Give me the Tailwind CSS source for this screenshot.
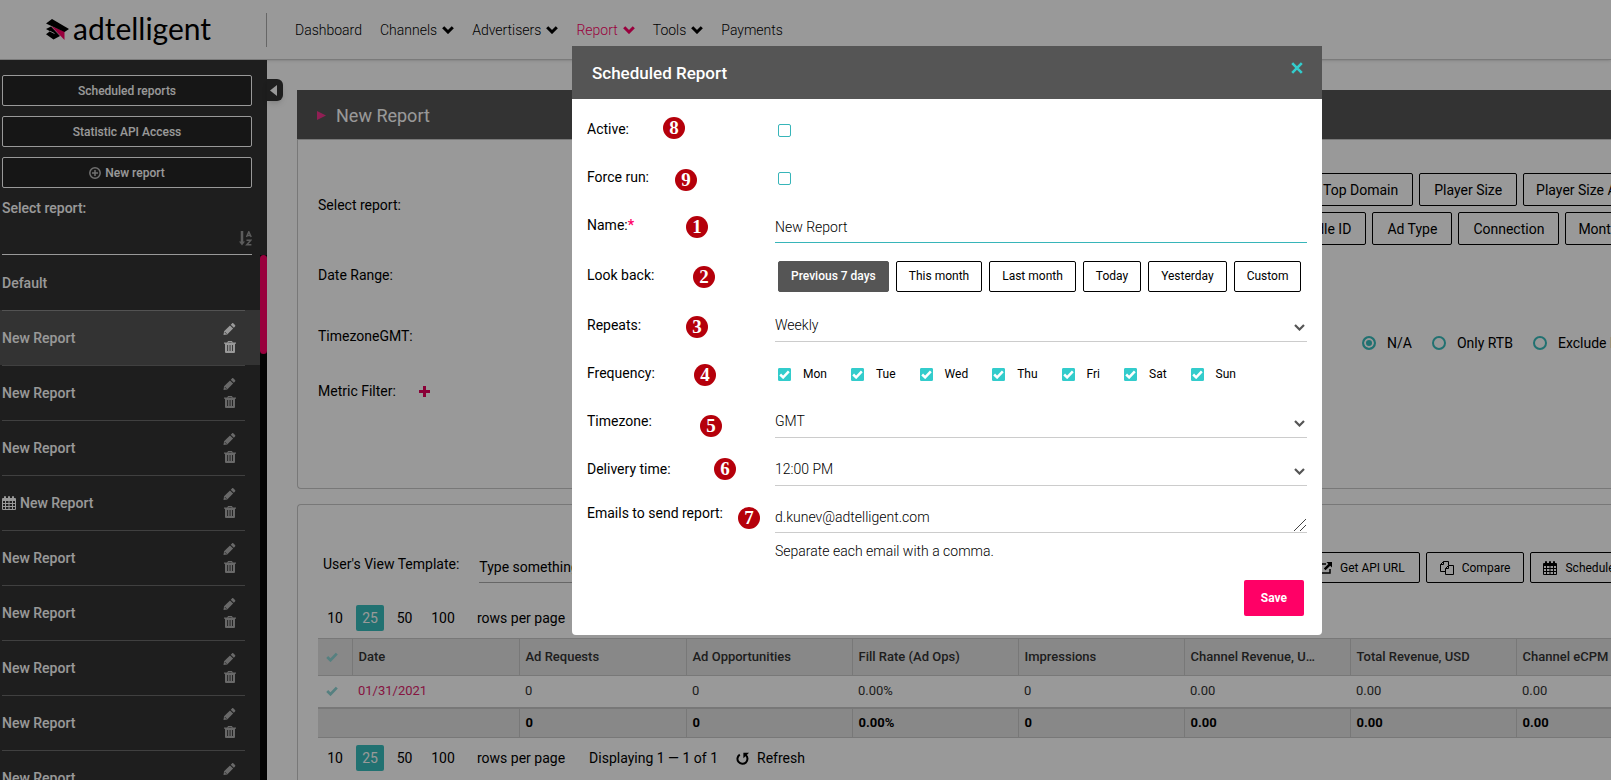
<!DOCTYPE html>
<html lang="en">
<head>
    <meta charset="UTF-8">
    <meta name="viewport" content="width=device-width, initial-scale=1.0">
    <title>Adtelligent - Scheduled Report</title>
    <script src="https://cdn.jsdelivr.net/npm/@tailwindcss/browser@4"></script>
</head>
<body class="h-screen overflow-hidden flex flex-col bg-white text-black text-[14px] leading-5 font-['Roboto',sans-serif]">

    <!-- Icon sprite -->
    <svg class="hidden">
        <symbol id="chevron" viewBox="0 0 12 8"><path d="M1.2 1.2 6 6l4.800-4.800" fill="none" stroke="currentColor" stroke-width="3"/></symbol>
        <symbol id="chevron-thin" viewBox="0 0 11 7"><path d="M1 1l4.500 4.500L10 1" fill="none" stroke="currentColor" stroke-width="2.200"/></symbol>
        <symbol id="pencil" viewBox="0 0 13 13"><path d="M0 13l.6-4L7 2.600 10.400 6 4 12.400zM7.800 1.800 9.200.5c.5-.5 1.100-.5 1.600 0l1.700 1.700c.5.500.5 1.100 0 1.600L11.200 5.200z" fill="currentColor"/><path d="M1.300 9.700l2 2" stroke="#323232" stroke-width=".8"/></symbol>
        <symbol id="trash" viewBox="0 0 12 12"><path fill="currentColor" fill-rule="evenodd" d="M4 0h4l.7 1.500H12v1.200h-1V11q0 1-1 1H2q-1 0-1-1V2.700H0V1.500h3.300zM4.500 1l-.2.500h3.400L7.500 1zM3.200 4v6h.9V4zm2.400 0v6h.9V4zM8 4v6h.9V4z"/></symbol>
        <symbol id="calendar" viewBox="0 0 14 14"><path fill="currentColor" fill-rule="evenodd" d="M1 2h1V1q0-1 1-1t1 1v1h2V1q0-1 1-1t1 1v1h2V1q0-1 1-1t1 1v1h1q1 0 1 1v10q0 1-1 1H1q-1 0-1-1V3q0-1 1-1zm0 3v2h2V5zm3 0v2h2.500V5zm3.500 0v2H10V5zM11 5v2h2V5zM1 8v2h2V8zm3 0v2h2.500V8zm3.500 0v2H10V8zM11 8v2h2V8zM1 11v2h2v-2zm3 0v2h2.500v-2zm3.500 0v2H10v-2zm3.500 0v2h2v-2z"/></symbol>
        <symbol id="check" viewBox="0 0 12 10"><path d="M1.200 5 4.500 8.200 10.800 1.600" fill="none" stroke="currentColor" stroke-width="2.800"/></symbol>
        <symbol id="refresh" viewBox="0 0 13 13"><path d="M3.800 2.600A5 5 0 1 0 9.700 3" fill="none" stroke="currentColor" stroke-width="2"/><path d="M13 .8H7.400v5.400z" fill="currentColor"/></symbol>
    </svg>

    <header class="h-[60px] shrink-0 flex items-center border-b border-[#ccc] shadow-sm relative">
        <a href="#" class="w-[267px] h-[34px] pl-[46px] flex items-center gap-1 border-r border-[#aaa]" aria-label="adtelligent">
            <svg class="w-[23px] h-[21px] shrink-0" viewBox="0 0 23 21">
                <path d="M5 7.500 0 10l4 2.200L0 15.200 7.500 20.500 14 17z" fill="#000"/>
                <path d="M4 12.200 8.500 14.500" stroke="#fff" stroke-width=".8"/>
                <path d="M5 7 18.500 12.500V21z" fill="#f06"/>
                <path d="M6 0 23 10 18.500 13 0 4.500z" fill="#000"/>
            </svg>
            <span class="font-['Lato',sans-serif] text-[30px] leading-8 -mt-1">adtelligent</span>
        </a>
        <nav class="flex items-center gap-[18px] pl-7 font-light">
            <a href="#">Dashboard</a>
            <a href="#" class="flex items-center gap-[5px]">Channels <svg class="w-3 h-2"><use href="#chevron"/></svg></a>
            <a href="#" class="flex items-center gap-[5px]">Advertisers <svg class="w-3 h-2"><use href="#chevron"/></svg></a>
            <a href="#" class="flex items-center gap-[5px] text-[#f06]">Report <svg class="w-3 h-2"><use href="#chevron"/></svg></a>
            <a href="#" class="flex items-center gap-[5px]">Tools <svg class="w-3 h-2"><use href="#chevron"/></svg></a>
            <a href="#">Payments</a>
        </nav>
    </header>

    <div class="flex flex-1 min-h-0">

        <aside class="relative w-[267px] shrink-0 bg-[#323232] text-white flex flex-col">
            <button class="absolute left-full top-[19px] w-4 h-[22px] pr-1 bg-[#323232] rounded-r-md shadow-md flex items-center justify-center" aria-label="Collapse sidebar">
                <svg class="w-[7px] h-[11px]" viewBox="0 0 7 11"><path d="M7 0v11L0 5.500z" fill="#fff"/></svg>
            </button>

            <div class="pl-0.5 pr-[15px] pt-[15px] shrink-0">
                <div class="flex flex-col gap-2.5 text-[12px] font-medium">
                    <button class="h-[31px] border border-white rounded-xs bg-[#252525]">Scheduled reports</button>
                    <button class="h-[31px] border border-white rounded-xs bg-[#252525]">Statistic API Access</button>
                    <button class="h-[31px] border border-white rounded-xs bg-[#252525] flex items-center justify-center gap-1">
                        <svg class="w-3 h-3" viewBox="0 0 12 12" fill="none" stroke="#bbb" stroke-width="1.500"><circle cx="6" cy="6" r="5.200"/><path d="M6 3v6M3 6h6"/></svg>
                        New report
                    </button>
                </div>
                <label for="report-search" class="block mt-2.5 font-medium">Select report:</label>
                <div class="h-[37px] flex items-end gap-1 border-b border-white pb-2">
                    <input id="report-search" type="text" class="flex-1 min-w-0 h-5 outline-none">
                    <svg class="w-[13px] h-[15px]" viewBox="0 0 13 15" fill="none" stroke="#999"><path d="M3 0v11" stroke-width="2.500"/><path d="M0 10.500h6L3 14.500z" fill="#999" stroke="none"/><path d="M7.500 6 9.800.8 12.200 6M8.200 4.500h3.400M7.500 9.200h4.300L7.800 13.700h4.600" stroke-width="1.500"/></svg>
                </div>
            </div>

            <div class="flex flex-1 min-h-0">
                <ul class="flex-1 overflow-hidden font-medium">
                    <li class="h-[55px] pl-0.5 flex items-center">Default</li>
                    <li class="h-[55px] pl-0.5 pr-[15px] bg-[#555]">
                        <div class="h-full pr-[9px] flex items-center border-t border-[#8a8a8a]"><span class="flex-1">New Report</span>
                            <div class="flex flex-col items-center gap-1.5"><button aria-label="Edit"><svg class="w-[13px] h-3"><use href="#pencil"/></svg></button><button aria-label="Delete"><svg class="w-3 h-3"><use href="#trash"/></svg></button></div></div>
                    </li>
                    <li class="h-[55px] pl-0.5 pr-[15px]">
                        <div class="h-full pr-[9px] flex items-center border-t border-[#6b6b6b]"><span class="flex-1">New Report</span>
                            <div class="flex flex-col items-center gap-1.5 text-[#b0b0b0]"><button aria-label="Edit"><svg class="w-[13px] h-3"><use href="#pencil"/></svg></button><button aria-label="Delete"><svg class="w-3 h-3"><use href="#trash"/></svg></button></div></div>
                    </li>
                    <li class="h-[55px] pl-0.5 pr-[15px]">
                        <div class="h-full pr-[9px] flex items-center border-t border-[#6b6b6b]"><span class="flex-1">New Report</span>
                            <div class="flex flex-col items-center gap-1.5 text-[#b0b0b0]"><button aria-label="Edit"><svg class="w-[13px] h-3"><use href="#pencil"/></svg></button><button aria-label="Delete"><svg class="w-3 h-3"><use href="#trash"/></svg></button></div></div>
                    </li>
                    <li class="h-[55px] pl-0.5 pr-[15px]">
                        <div class="h-full pr-[9px] flex items-center border-t border-[#6b6b6b]"><svg class="w-3.5 h-3.5 mr-1"><use href="#calendar"/></svg><span class="flex-1">New Report</span>
                            <div class="flex flex-col items-center gap-1.5 text-[#b0b0b0]"><button aria-label="Edit"><svg class="w-[13px] h-3"><use href="#pencil"/></svg></button><button aria-label="Delete"><svg class="w-3 h-3"><use href="#trash"/></svg></button></div></div>
                    </li>
                    <li class="h-[55px] pl-0.5 pr-[15px]">
                        <div class="h-full pr-[9px] flex items-center border-t border-[#6b6b6b]"><span class="flex-1">New Report</span>
                            <div class="flex flex-col items-center gap-1.5 text-[#b0b0b0]"><button aria-label="Edit"><svg class="w-[13px] h-3"><use href="#pencil"/></svg></button><button aria-label="Delete"><svg class="w-3 h-3"><use href="#trash"/></svg></button></div></div>
                    </li>
                    <li class="h-[55px] pl-0.5 pr-[15px]">
                        <div class="h-full pr-[9px] flex items-center border-t border-[#6b6b6b]"><span class="flex-1">New Report</span>
                            <div class="flex flex-col items-center gap-1.5 text-[#b0b0b0]"><button aria-label="Edit"><svg class="w-[13px] h-3"><use href="#pencil"/></svg></button><button aria-label="Delete"><svg class="w-3 h-3"><use href="#trash"/></svg></button></div></div>
                    </li>
                    <li class="h-[55px] pl-0.5 pr-[15px]">
                        <div class="h-full pr-[9px] flex items-center border-t border-[#6b6b6b]"><span class="flex-1">New Report</span>
                            <div class="flex flex-col items-center gap-1.5 text-[#b0b0b0]"><button aria-label="Edit"><svg class="w-[13px] h-3"><use href="#pencil"/></svg></button><button aria-label="Delete"><svg class="w-3 h-3"><use href="#trash"/></svg></button></div></div>
                    </li>
                    <li class="h-[55px] pl-0.5 pr-[15px]">
                        <div class="h-full pr-[9px] flex items-center border-t border-[#6b6b6b]"><span class="flex-1">New Report</span>
                            <div class="flex flex-col items-center gap-1.5 text-[#b0b0b0]"><button aria-label="Edit"><svg class="w-[13px] h-3"><use href="#pencil"/></svg></button><button aria-label="Delete"><svg class="w-3 h-3"><use href="#trash"/></svg></button></div></div>
                    </li>
                    <li class="h-[55px] pl-0.5 pr-[15px]">
                        <div class="h-full pr-[9px] flex items-center border-t border-[#6b6b6b]"><span class="flex-1">New Report</span>
                            <div class="flex flex-col items-center gap-1.5 text-[#b0b0b0]"><button aria-label="Edit"><svg class="w-[13px] h-3"><use href="#pencil"/></svg></button><button aria-label="Delete"><svg class="w-3 h-3"><use href="#trash"/></svg></button></div></div>
                    </li>
                </ul>
                <div class="w-[7px] bg-[#080808]"><div class="h-[99px] rounded-full bg-[#f06]"></div></div>
            </div>
        </aside>

        <main class="flex-1 min-w-0 overflow-hidden pl-[30px] pt-[30px] flex flex-col gap-[15px]">

            <!-- Report settings -->
            <section class="h-[399px] shrink-0">
                <h1 class="h-[49px] pt-0.5 bg-[#555] text-white text-[18px] flex items-center gap-2.5 pl-5 font-normal">
                    <svg class="w-[9px] h-[9px]" viewBox="0 0 9 9"><path d="M0 0v9l9-4.500z" fill="#f0348c"/></svg>
                    New Report
                </h1>
                <div class="h-[350px] border border-r-0 border-[#c8c8c8] rounded-bl flex justify-between">
                    <div class="pl-5 pt-[55px] flex flex-col">
                        <p class="h-[70px]">Select report:</p>
                        <p class="h-[61px]">Date Range:</p>
                        <p class="h-[55px]">TimezoneGMT:</p>
                        <p class="flex items-center gap-[23px]">Metric Filter:
                            <button aria-label="Add filter"><svg class="w-[11px] h-[11px]" viewBox="0 0 11 11"><path d="M5.500 0v11M0 5.500h11" stroke="#e6005c" stroke-width="3"/></svg></button>
                        </p>
                    </div>
                    <div class="w-[334px] pt-[33px] overflow-hidden">
                        <div class="flex gap-1.5 pl-[31px] whitespace-nowrap">
                            <button class="h-[33px] px-3.5 shrink-0 border border-black rounded-xs">Top Domain</button>
                            <button class="h-[33px] px-3.5 shrink-0 border border-black rounded-xs">Player Size</button>
                            <button class="h-[33px] px-3 shrink-0 border border-black rounded-xs">Player Size Advanced</button>
                        </div>
                        <div class="flex gap-1.5 mt-1.5 whitespace-nowrap">
                            <button class="h-[33px] px-3.5 shrink-0 border border-black rounded-xs">Bundle ID</button>
                            <button class="h-[33px] px-3.5 shrink-0 border border-black rounded-xs">Ad Type</button>
                            <button class="h-[33px] px-3.5 shrink-0 border border-black rounded-xs">Connection</button>
                            <button class="h-[33px] px-3 shrink-0 border border-black rounded-xs">Month</button>
                        </div>
                        <div class="flex gap-5 mt-[88px] pl-[85px] whitespace-nowrap">
                            <label class="shrink-0 flex items-center gap-[11px]"><input type="radio" name="rtb" checked class="appearance-none w-3.5 h-3.5 rounded-full border-2 border-[#37bdbd] bg-white checked:bg-[#37bdbd] checked:ring-2 checked:ring-white checked:ring-inset">N/A</label>
                            <label class="shrink-0 flex items-center gap-[11px]"><input type="radio" name="rtb" class="appearance-none w-3.5 h-3.5 rounded-full border-2 border-[#37bdbd] bg-white">Only RTB</label>
                            <label class="shrink-0 flex items-center gap-[11px]"><input type="radio" name="rtb" class="appearance-none w-3.5 h-3.5 rounded-full border-2 border-[#37bdbd] bg-white">Exclude RTB</label>
                        </div>
                    </div>
                </div>
            </section>

            <!-- Report table -->
            <section class="shrink-0 border border-r-0 border-[#c8c8c8] rounded-tl pl-5">
                <div class="flex justify-between pt-[47px]">
                    <div class="flex pl-[5px]">
                        <label for="view-template" class="pt-0.5">User's View Template:</label>
                        <input id="view-template" type="text" placeholder="Type something" class="ml-5 w-[200px] h-[31px] border-b border-[#aaa] outline-none placeholder:text-black">
                    </div>
                    <div class="w-[306px] flex gap-1.5 overflow-hidden whitespace-nowrap text-[12px]">
                        <button class="h-[31px] px-3.5 shrink-0 border border-black rounded-xs flex items-center gap-2">
                            <svg class="w-3 h-3" viewBox="0 0 12 12"><path d="M6 2H1v9h9V7" fill="none" stroke="#000" stroke-width="1.500"/><path d="M6.500 0H12v5.500L10.200 3.700 5.500 8.300 3.800 6.600 8.400 2z"/></svg>Get API URL</button>
                        <button class="h-[31px] px-[13px] shrink-0 border border-black rounded-xs flex items-center gap-2">
                            <svg class="w-3.5 h-3.5" viewBox="0 0 14 14" fill="none" stroke="#000"><path d="M5.500 10.500h-5v-7l3-3h5V4M3.500.5v3h-3M5.500 13.500v-6l3-3h5v9zM8.500 4.500v3h-3"/></svg>Compare</button>
                        <button class="h-[31px] px-3 shrink-0 border border-black rounded-xs flex items-center gap-2">
                            <svg class="w-3.5 h-3.5"><use href="#calendar"/></svg>Schedule</button>
                    </div>
                </div>

                <div class="flex items-center h-[26px] mt-[22px] mb-[7px]">
                    <button class="w-[38px] text-center pr-1">10</button><button class="w-7 h-[26px] bg-[#37bdbd] text-white rounded-xs">25</button><button class="w-[41px]">50</button><button class="w-9">100</button>
                    <span class="ml-4">rows per page</span>
                </div>

                <table class="table-fixed w-[1364px] border-collapse text-[13px] text-left text-[#333]">
                    <colgroup>
                        <col class="w-[34px]"><col class="w-[167px]"><col class="w-[167px]"><col class="w-[166px]"><col class="w-[166px]"><col class="w-[166px]"><col class="w-[166px]"><col class="w-[166px]"><col class="w-[166px]">
                    </colgroup>
                    <thead>
                        <tr class="h-[37px] bg-[#e3e3e3] border-y border-[#c8c8c8]">
                            <th class="pl-2 text-[#8fd6d6]"><svg class="w-3 h-2.5"><use href="#check"/></svg></th>
                            <th class="px-1.5 font-medium border-l border-[#c8c8c8]">Date</th>
                            <th class="px-1.5 font-medium border-l border-[#c8c8c8]">Ad Requests</th>
                            <th class="px-1.5 font-medium border-l border-[#c8c8c8]">Ad Opportunities</th>
                            <th class="px-1.5 font-medium border-l border-[#c8c8c8]">Fill Rate (Ad Ops)</th>
                            <th class="px-1.5 font-medium border-l border-[#c8c8c8]">Impressions</th>
                            <th class="px-1.5 font-medium border-l border-[#c8c8c8]">Channel Revenue, U…</th>
                            <th class="px-1.5 font-medium border-l border-[#c8c8c8]">Total Revenue, USD</th>
                            <th class="px-1.5 font-medium border-l border-[#c8c8c8] whitespace-nowrap">Channel eCPM</th>
                        </tr>
                    </thead>
                    <tbody>
                        <tr class="h-8">
                            <td class="pl-2 text-[#8fd6d6]"><svg class="w-3 h-2.5"><use href="#check"/></svg></td>
                            <td class="px-1.5"><a href="#" class="text-[#e0246c]">01/31/2021</a></td>
                            <td class="px-1.5">0</td>
                            <td class="px-1.5">0</td>
                            <td class="px-1.5">0.00%</td>
                            <td class="px-1.5">0</td>
                            <td class="px-1.5">0.00</td>
                            <td class="px-1.5">0.00</td>
                            <td class="px-1.5">0.00</td>
                        </tr>
                    </tbody>
                    <tfoot>
                        <tr class="h-[30px] bg-[#e3e3e3] border-t-2 border-b border-[#c8c8c8] font-bold text-black">
                            <td colspan="2"></td>
                            <td class="px-1.5 border-l border-[#c8c8c8]">0</td>
                            <td class="px-1.5 border-l border-[#c8c8c8]">0</td>
                            <td class="px-1.5 border-l border-[#c8c8c8]">0.00%</td>
                            <td class="px-1.5 border-l border-[#c8c8c8]">0</td>
                            <td class="px-1.5 border-l border-[#c8c8c8]">0.00</td>
                            <td class="px-1.5 border-l border-[#c8c8c8]">0.00</td>
                            <td class="px-1.5 border-l border-[#c8c8c8]">0.00</td>
                        </tr>
                    </tfoot>
                </table>

                <div class="flex items-center h-[26px] mt-[7px] mb-6">
                    <button class="w-[38px] text-center pr-1">10</button><button class="w-7 h-[26px] bg-[#37bdbd] text-white rounded-xs">25</button><button class="w-[41px]">50</button><button class="w-9">100</button>
                    <span class="ml-4">rows per page</span>
                    <span class="ml-6">Displaying 1 — 1 of 1</span>
                    <button class="ml-[18px] flex items-center gap-2"><svg class="w-[13px] h-[13px]"><use href="#refresh"/></svg>Refresh</button>
                </div>
            </section>
        </main>
    </div>

    <!-- Scheduled report modal -->
    <div class="fixed inset-0 z-10 bg-black/40 pt-[46px] pl-[283px] flex justify-center items-start">
        <form class="relative w-[750px] bg-white rounded-b overflow-hidden">
            <div class="h-[53px] bg-[#555] pl-5 pr-[19px] flex justify-between">
                <h2 class="text-white text-[17px] leading-[54px] font-medium">Scheduled Report</h2>
                <button type="button" class="h-3 mt-4" aria-label="Close"><svg class="w-3 h-3" viewBox="0 0 12 12"><path d="M1.200 1.200l9.600 9.600M10.800 1.200l-9.600 9.600" stroke="#3cc" stroke-width="2.600"/></svg></button>
            </div>

            <div class="pl-[15px] pr-[15px] pt-1.5">
                <div class="h-12 flex items-center">
                    <label for="active" class="w-[188px]">Active:</label>
                    <input id="active" type="checkbox" class="appearance-none mt-0.5 ml-[3px] w-[13px] h-[13px] border border-[#37b5b9] rounded-xs">
                </div>
                <div class="h-12 flex items-center">
                    <label for="force-run" class="w-[188px]">Force run:</label>
                    <input id="force-run" type="checkbox" class="appearance-none mt-0.5 ml-[3px] w-[13px] h-[13px] border border-[#37b5b9] rounded-xs">
                </div>
                <div class="h-12 flex items-center">
                    <label for="name" class="w-[188px]">Name:<span class="text-[#f06] font-bold">*</span></label>
                    <input id="name" type="text" value="New Report" class="flex-1 h-[34px] mt-0.5 pt-0.5 border-b border-[#37b5b9] outline-none font-light">
                </div>
                <div class="h-[52px] flex items-center">
                    <span class="w-[188px]">Look back:</span>
                    <div class="flex gap-[7px] pl-[3px] pt-0.5 text-[12px]">
                        <button type="button" class="h-[31px] px-3 border border-[#555] rounded-xs bg-[#555] text-white font-medium">Previous 7 days</button>
                        <button type="button" class="h-[31px] px-3 border border-black rounded-xs">This month</button>
                        <button type="button" class="h-[31px] px-3 border border-black rounded-xs">Last month</button>
                        <button type="button" class="h-[31px] px-3 border border-black rounded-xs">Today</button>
                        <button type="button" class="h-[31px] px-3 border border-black rounded-xs">Yesterday</button>
                        <button type="button" class="h-[31px] px-3 border border-black rounded-xs">Custom</button>
                    </div>
                </div>
                <div class="h-12 flex items-center">
                    <label for="repeats" class="w-[188px]">Repeats:</label>
                    <div class="relative flex-1">
                        <select id="repeats" class="block appearance-none w-full h-[34px] border-b border-[#ccc] outline-none font-light"><option>Weekly</option></select>
                        <svg class="absolute right-0.5 top-4 w-[11px] h-[7px] text-[#555] pointer-events-none"><use href="#chevron-thin"/></svg>
                    </div>
                </div>
                <fieldset class="h-12 flex items-center">
                    <legend class="float-left w-[188px]">Frequency:</legend>
                    <div class="flex gap-6 pl-[3px] pt-0.5 text-[12px]">
                        <label class="relative flex items-center gap-3"><input type="checkbox" checked class="peer appearance-none w-[13px] h-[13px] rounded-[1px] border border-[#3cc] checked:bg-[#3cc]"><svg class="hidden peer-checked:block absolute left-px w-[11px] h-[9px] text-white"><use href="#check"/></svg>Mon</label>
                        <label class="relative flex items-center gap-3"><input type="checkbox" checked class="peer appearance-none w-[13px] h-[13px] rounded-[1px] border border-[#3cc] checked:bg-[#3cc]"><svg class="hidden peer-checked:block absolute left-px w-[11px] h-[9px] text-white"><use href="#check"/></svg>Tue</label>
                        <label class="relative flex items-center gap-3"><input type="checkbox" checked class="peer appearance-none w-[13px] h-[13px] rounded-[1px] border border-[#3cc] checked:bg-[#3cc]"><svg class="hidden peer-checked:block absolute left-px w-[11px] h-[9px] text-white"><use href="#check"/></svg>Wed</label>
                        <label class="relative flex items-center gap-3"><input type="checkbox" checked class="peer appearance-none w-[13px] h-[13px] rounded-[1px] border border-[#3cc] checked:bg-[#3cc]"><svg class="hidden peer-checked:block absolute left-px w-[11px] h-[9px] text-white"><use href="#check"/></svg>Thu</label>
                        <label class="relative flex items-center gap-3"><input type="checkbox" checked class="peer appearance-none w-[13px] h-[13px] rounded-[1px] border border-[#3cc] checked:bg-[#3cc]"><svg class="hidden peer-checked:block absolute left-px w-[11px] h-[9px] text-white"><use href="#check"/></svg>Fri</label>
                        <label class="relative flex items-center gap-3"><input type="checkbox" checked class="peer appearance-none w-[13px] h-[13px] rounded-[1px] border border-[#3cc] checked:bg-[#3cc]"><svg class="hidden peer-checked:block absolute left-px w-[11px] h-[9px] text-white"><use href="#check"/></svg>Sat</label>
                        <label class="relative flex items-center gap-3"><input type="checkbox" checked class="peer appearance-none w-[13px] h-[13px] rounded-[1px] border border-[#3cc] checked:bg-[#3cc]"><svg class="hidden peer-checked:block absolute left-px w-[11px] h-[9px] text-white"><use href="#check"/></svg>Sun</label>
                    </div>
                </fieldset>
                <div class="h-12 flex items-center">
                    <label for="timezone" class="w-[188px]">Timezone:</label>
                    <div class="relative flex-1">
                        <select id="timezone" class="block appearance-none w-full h-[34px] border-b border-[#ccc] outline-none font-light"><option>GMT</option></select>
                        <svg class="absolute right-0.5 top-4 w-[11px] h-[7px] text-[#555] pointer-events-none"><use href="#chevron-thin"/></svg>
                    </div>
                </div>
                <div class="h-12 flex items-center">
                    <label for="delivery" class="w-[188px]">Delivery time:</label>
                    <div class="relative flex-1">
                        <select id="delivery" class="block appearance-none w-full h-[34px] border-b border-[#ccc] outline-none font-light"><option>12:00 PM</option></select>
                        <svg class="absolute right-0.5 top-4 w-[11px] h-[7px] text-[#555] pointer-events-none"><use href="#chevron-thin"/></svg>
                    </div>
                </div>
                <div class="flex pt-2.5">
                    <label for="emails" class="w-[188px]">Emails to send report:</label>
                    <div class="relative flex-1 font-light">
                        <textarea id="emails" rows="1" class="block w-full h-[30px] pt-1 border-b border-[#ccc] outline-none resize-none overflow-hidden">d.kunev@adtelligent.com</textarea>
                        <svg class="absolute right-px top-4 w-3 h-3 pointer-events-none" viewBox="0 0 12 12"><path d="M0 12 12 0M6 12l6-6" stroke="#444"/></svg>
                        <p class="mt-2">Separate each email with a comma.</p>
                    </div>
                </div>
                <div class="flex justify-end pt-[19px] pb-[19px] pr-[3px]">
                    <button type="submit" class="h-9 px-[17px] rounded-xs bg-[#f06] text-white text-[12px] font-bold">Save</button>
                </div>
            </div>

            <!-- Numbered callouts -->
            <div class="text-white font-bold text-[19px] leading-[22px] text-center font-['Liberation_Serif',serif]">
                <span class="absolute left-[91px] top-[71px] w-[22px] h-[22px] rounded-full bg-[#b5000b]">8</span>
                <span class="absolute left-[103px] top-[123px] w-[22px] h-[22px] rounded-full bg-[#b5000b]">9</span>
                <span class="absolute left-[114px] top-[170px] w-[22px] h-[22px] rounded-full bg-[#b5000b]">1</span>
                <span class="absolute left-[121px] top-[220px] w-[22px] h-[22px] rounded-full bg-[#b5000b]">2</span>
                <span class="absolute left-[114px] top-[270px] w-[22px] h-[22px] rounded-full bg-[#b5000b]">3</span>
                <span class="absolute left-[122px] top-[318px] w-[22px] h-[22px] rounded-full bg-[#b5000b]">4</span>
                <span class="absolute left-[128px] top-[369px] w-[22px] h-[22px] rounded-full bg-[#b5000b]">5</span>
                <span class="absolute left-[142px] top-[412px] w-[22px] h-[22px] rounded-full bg-[#b5000b]">6</span>
                <span class="absolute left-[166px] top-[461px] w-[22px] h-[22px] rounded-full bg-[#b5000b]">7</span>
            </div>
        </form>
    </div>

</body>
</html>
